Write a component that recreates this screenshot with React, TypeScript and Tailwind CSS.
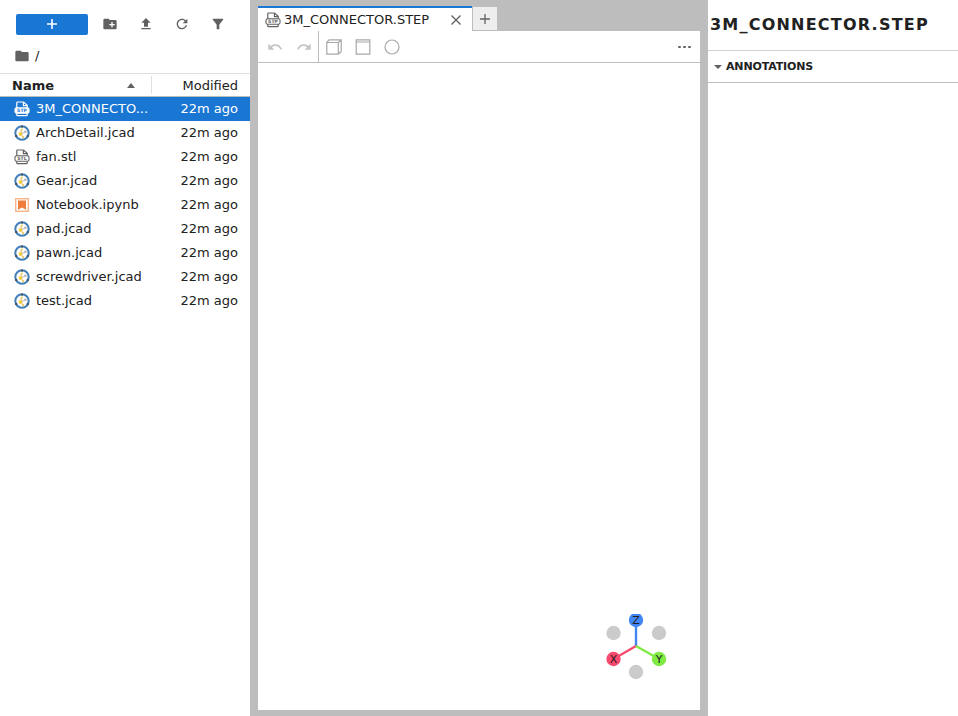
const files = [
  { name: "3M_CONNECTOR.STEP", label: "3M_CONNECTO...", icon: "step" },
  { name: "ArchDetail.jcad", label: "ArchDetail.jcad", icon: "jcad" },
  { name: "fan.stl", label: "fan.stl", icon: "stl" },
  { name: "Gear.jcad", label: "Gear.jcad", icon: "jcad" },
  { name: "Notebook.ipynb", label: "Notebook.ipynb", icon: "notebook" },
  { name: "pad.jcad", label: "pad.jcad", icon: "jcad" },
  { name: "pawn.jcad", label: "pawn.jcad", icon: "jcad" },
  { name: "screwdriver.jcad", label: "screwdriver.jcad", icon: "jcad" },
  { name: "test.jcad", label: "test.jcad", icon: "jcad" },
];

const MdIcon: React.FC<{ d: string; size?: number; color?: string }> = ({ d, size = 16, color = "#616161" }) => (
  <svg width={size} height={size} viewBox="0 0 24 24" fill={color}>
    <path d={d} />
  </svg>
);

const CadFileIcon: React.FC<{ label: string; color: string; bg: string; size?: number }> = ({ label, color, bg, size = 16 }) => (
  <svg width={size} height={size} viewBox="0 0 16 16" fill="none">
    <path d="M2.8 7V1.8c0-.5.3-.8.8-.8h6l3.6 3.2V7" stroke={color} strokeWidth="1.2" />
    <path d="M9.4 1.2v3.4h3.6" stroke={color} strokeWidth="1.2" />
    <rect x="1" y="6.7" width="14" height="5.6" rx="1.6" fill={bg} stroke={color} strokeWidth="1.1" />
    <text x="8" y="11.2" fontSize="4.6" fontWeight="700" textAnchor="middle" fill={color === "#ffffff" ? "#1976d2" : color} fontFamily="'DejaVu Sans', sans-serif">
      {label}
    </text>
    <path d="M2.8 12.3v1.6c0 .5.3.8.8.8h8.8c.5 0 .8-.3.8-.8v-1.6" stroke={color} strokeWidth="1.2" />
  </svg>
);

const JcadIcon = () => (
  <svg width="16" height="16" viewBox="0 0 16 16" fill="none">
    <circle cx="8" cy="8" r="6.7" stroke="#3f7fb5" strokeWidth="2" />
    <circle cx="8" cy="1.6" r="1.2" fill="#44586b" />
    <circle cx="2.2" cy="11" r="1.2" fill="#44586b" />
    <circle cx="13.8" cy="11" r="1.2" fill="#44586b" />
    <path d="M6.6 9 7.6 4.6M6.6 9l5-2.2M6.6 9l2.6 3" stroke="#b5b5b5" strokeWidth="1" />
    <circle cx="7.6" cy="4.8" r="1.3" fill="#f3d67a" />
    <circle cx="11.4" cy="6.8" r="1.4" fill="#bdbdbd" />
    <circle cx="9.2" cy="12" r="1.1" fill="#f0c64a" />
    <circle cx="6.6" cy="9" r="1.9" fill="#f5cb3c" />
  </svg>
);

const NotebookIcon = () => (
  <svg width="16" height="16" viewBox="0 0 16 16">
    <rect x="1.7" y="1.7" width="12.6" height="12.6" fill="#fff" stroke="#f8b48a" strokeWidth="1.4" />
    <path d="M4 3.5h8v9.2L8 10.4l-4 2.3z" fill="#ef7d3b" />
  </svg>
);

const FileIcon: React.FC<{ kind: string; selected: boolean }> = ({ kind, selected }) => {
  if (kind === "jcad") return <JcadIcon />;
  if (kind === "notebook") return <NotebookIcon />;
  if (kind === "step") {
    return selected ? (
      <CadFileIcon label="STP" color="#ffffff" bg="#ffffff" />
    ) : (
      <CadFileIcon label="STP" color="#616161" bg="#ffffff" />
    );
  }
  return <CadFileIcon label="STL" color="#616161" bg="#ffffff" />;
};

const Gizmo = () => (
  <svg width="70" height="70" viewBox="0 0 70 70" className="absolute left-[343px] top-[583px]">
    <circle cx="12.5" cy="19" r="7.2" fill="#cbcbcb" />
    <circle cx="58" cy="19" r="7.2" fill="#cbcbcb" />
    <circle cx="35" cy="58" r="7.2" fill="#cbcbcb" />
    <line x1="35" y1="32" x2="35" y2="6" stroke="#4286f4" strokeWidth="2.4" />
    <line x1="35" y1="32" x2="12.5" y2="45" stroke="#f64a6e" strokeWidth="2.4" />
    <line x1="35" y1="32" x2="58" y2="45" stroke="#80ea42" strokeWidth="2.4" />
    <circle cx="35" cy="6" r="7.2" fill="#4286f4" />
    <circle cx="12.5" cy="45" r="7.2" fill="#f64a6e" />
    <circle cx="58" cy="45" r="7.2" fill="#80ea42" />
    <text x="35" y="10" fontSize="11" textAnchor="middle" fill="#222" fontFamily="'DejaVu Sans', sans-serif">Z</text>
    <text x="12.5" y="49" fontSize="11" textAnchor="middle" fill="#222" fontFamily="'DejaVu Sans', sans-serif">X</text>
    <text x="58" y="49" fontSize="11" textAnchor="middle" fill="#222" fontFamily="'DejaVu Sans', sans-serif">Y</text>
  </svg>
);

export default function App() {
  return (
    <div className="flex h-[716px] w-[958px] overflow-hidden bg-white font-['DejaVu_Sans',sans-serif] text-[13px] text-[#212121]">
      {/* file browser */}
      <div className="flex w-[250px] shrink-0 flex-col">
        <div className="flex h-[48px] items-center pl-4 pr-[4px]">
          <div className="flex h-[21px] w-[72px] items-center justify-center rounded-[2px] bg-[#1976d2]">
            <svg width="12" height="12" viewBox="0 0 12 12" fill="none">
              <path d="M6 1v10M1 6h10" stroke="#fff" strokeWidth="1.6" />
            </svg>
          </div>
          <div className="ml-[14px] flex items-center gap-5">
            <MdIcon d="M20 6h-8l-2-2H4c-1.11 0-1.99.89-1.99 2L2 18c0 1.11.89 2 2 2h16c1.11 0 2-.89 2-2V8c0-1.11-.89-2-2-2zm-1 8h-3v3h-2v-3h-3v-2h3V9h2v3h3v2z" />
            <MdIcon d="M9 16h6v-6h4l-7-7-7 7h4zm-4 2h14v2H5z" />
            <MdIcon d="M17.65 6.35C16.2 4.9 14.21 4 12 4c-4.42 0-7.99 3.58-7.99 8s3.57 8 7.99 8c3.73 0 6.84-2.55 7.73-6h-2.08c-.82 2.33-3.04 4-5.65 4-3.31 0-6-2.69-6-6s2.69-6 6-6c1.66 0 3.14.69 4.22 1.78L13 11h7V4l-2.35 2.35z" />
            <MdIcon d="M4.25 5.61C6.27 8.2 10 13 10 13v6c0 .55.45 1 1 1h2c.55 0 1-.45 1-1v-6s3.72-4.8 5.74-7.39A.998.998 0 0 0 18.95 4H5.04a1 1 0 0 0-.79 1.61z" />
          </div>
        </div>
        <div className="flex h-[25px] items-center gap-[5px] pb-[9px] pl-[14px]">
          <MdIcon d="M10 4H4c-1.1 0-1.99.9-1.99 2L2 18c0 1.1.9 2 2 2h16c1.1 0 2-.9 2-2V8c0-1.1-.9-2-2-2h-8l-2-2z" />
          <span>/</span>
        </div>
        <div className="flex h-[24px] items-center border-y border-[#e0e0e0] border-b-[#bdbdbd] leading-none">
          <div className="flex h-[18px] w-[152px] items-center justify-between border-r border-[#e0e0e0] pl-3 pr-[16px]">
            <span className="font-bold">Name</span>
            <span className="h-0 w-0 border-x-[4px] border-b-[5px] border-x-transparent border-b-[#616161]" />
          </div>
          <span className="flex-1 pr-3 text-right">Modified</span>
        </div>
        <div className="flex flex-col">
          {files.map((file, i) => (
            <div
              key={file.name}
              className={`flex h-[24px] items-center pl-[14px] pr-3 ${i === 0 ? "bg-[#1976d2] text-white" : ""}`}
            >
              <FileIcon kind={file.icon} selected={i === 0} />
              <span className="ml-[6px] flex-1 truncate">{file.label}</span>
              <span>22m ago</span>
            </div>
          ))}
        </div>
      </div>

      {/* main area */}
      <div className="flex w-[458px] shrink-0 flex-col bg-[#bdbdbd] px-2 pb-[6px] pt-[6px]">
        <div className="flex h-[25px] items-stretch">
          <div className="flex w-[214px] items-center border-t-2 border-[#1976d2] bg-white pl-[7px] pr-[11px]">
            <CadFileIcon label="STP" color="#616161" bg="#ffffff" />
            <span className="ml-[3px] flex-1 text-[#212121]">3M_CONNECTOR.STEP</span>
            <svg width="10" height="10" viewBox="0 0 10 10" fill="none">
              <path d="M.5.5l9 9M9.5.5l-9 9" stroke="#616161" strokeWidth="1.3" />
            </svg>
          </div>
          <div className="flex w-[26px] items-center justify-center border border-[#bdbdbd] bg-[#eeeeee]">
            <svg width="12" height="12" viewBox="0 0 12 12" fill="none">
              <path d="M6 1v10M1 6h10" stroke="#616161" strokeWidth="1.3" />
            </svg>
          </div>
        </div>
        <div className="relative flex flex-1 flex-col bg-white">
          <div className="flex h-[32px] items-center border-b border-[#bdbdbd] pr-[9px]">
            <div className="flex h-full items-center gap-[13px] border-r border-[#bdbdbd] pl-[9px] pr-[6px]">
              <MdIcon d="M12.5 8c-2.65 0-5.05.99-6.9 2.6L2 7v9h9l-3.62-3.62c1.39-1.16 3.16-1.88 5.12-1.88 3.54 0 6.55 2.31 7.6 5.5l2.37-.78C21.08 11.03 17.15 8 12.5 8z" color="#c4c4c4" />
              <MdIcon d="M18.4 10.6C16.55 8.99 14.15 8 11.5 8c-4.65 0-8.58 3.03-9.96 7.22L3.9 16c1.05-3.19 4.05-5.5 7.6-5.5 1.95 0 3.73.72 5.12 1.88L13 16h9V7l-3.6 3.6z" color="#c4c4c4" />
            </div>
            <div className="ml-[7px] flex items-center gap-[13px]">
              <svg width="16" height="16" viewBox="0 0 16 16" fill="none" stroke="#a8a8a8" strokeWidth="1.2">
                <path d="M.8 3.5h11.5v11.7H.8zM.8 3.5 3 .8h12.2v11.7l-2.9 2.7M12.3 3.5l2.9-2.7" />
              </svg>
              <svg width="16" height="16" viewBox="0 0 16 16" fill="none" stroke="#a8a8a8" strokeWidth="1.2">
                <path d="M1.2.8h13.6v14.4H1.2zM1.2 3h13.6" />
              </svg>
              <svg width="16" height="16" viewBox="0 0 16 16" fill="none" stroke="#a8a8a8" strokeWidth="1.2">
                <circle cx="8" cy="8" r="7" />
              </svg>
            </div>
            <div className="ml-auto flex items-center gap-[2px]">
              <span className="h-[2px] w-[3px] rounded-full bg-[#616161]" />
              <span className="h-[2px] w-[3px] rounded-full bg-[#616161]" />
              <span className="h-[2px] w-[3px] rounded-full bg-[#616161]" />
            </div>
          </div>
          <Gizmo />
        </div>
      </div>

      {/* right panel */}
      <div className="flex flex-1 flex-col">
        <div className="flex h-[51px] items-center border-b border-[#d0d0d0] pl-[2px] text-[16px] font-bold tracking-[1.22px]">
          3M_CONNECTOR.STEP
        </div>
        <div className="flex h-[32px] items-center border-b border-[#bdbdbd] pl-[6px] pt-[1px] text-[11px] font-bold tracking-[-0.15px]">
          <span className="h-0 w-0 border-x-[4px] border-t-[4px] border-x-transparent border-t-[#616161]" />
          <span className="ml-[4px]">ANNOTATIONS</span>
        </div>
      </div>
    </div>
  );
}
